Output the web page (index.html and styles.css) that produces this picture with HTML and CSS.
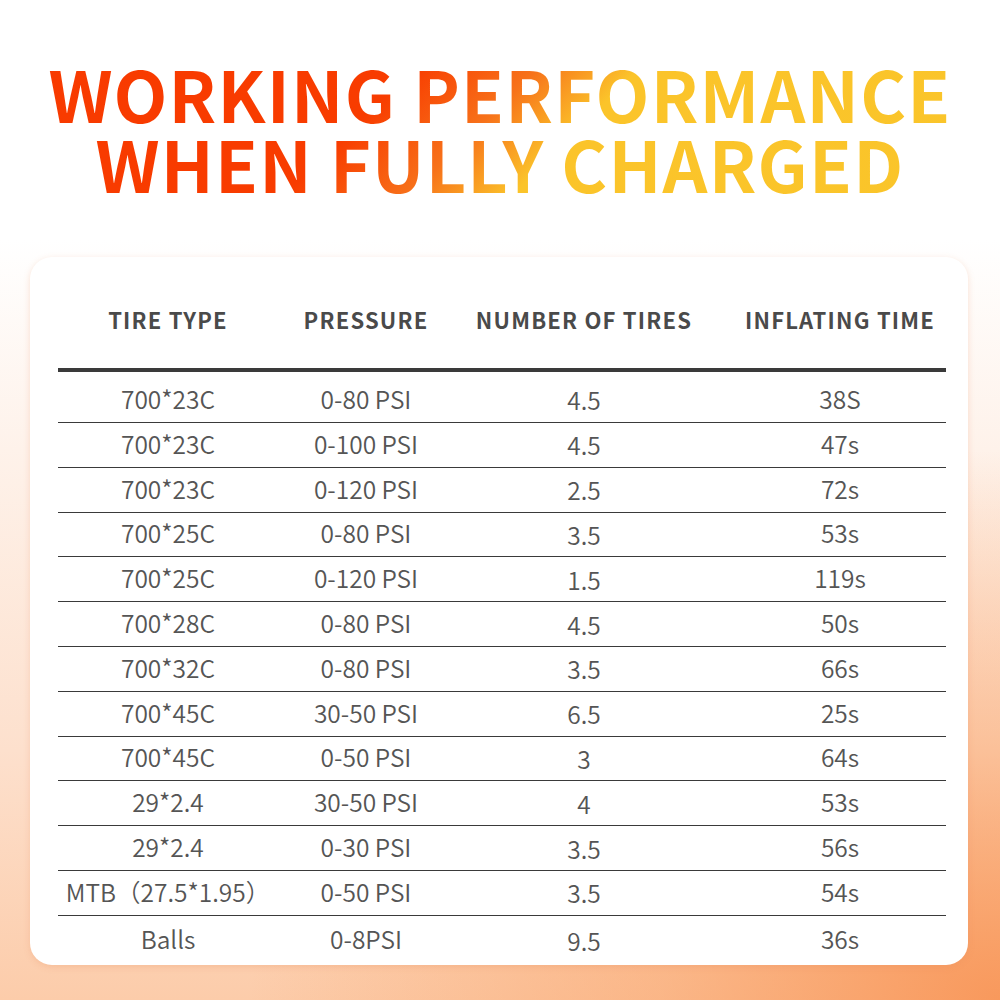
FILE: index.html
```html
<!DOCTYPE html>
<html>
<head>
<meta charset="utf-8">
<link rel="stylesheet" href="styles.css">
</head>
<body>
<div class="page">
  <h1 class="title"><span class="line">WORKING PERFORMANCE</span><span class="line">WHEN FULLY CHARGED</span></h1>
  <div class="card">
    <div class="table">
      <div class="row head">
        <div class="c c1">TIRE TYPE</div>
        <div class="c c2">PRESSURE</div>
        <div class="c c3">NUMBER OF TIRES</div>
        <div class="c c4">INFLATING TIME</div>
      </div>
      <div class="row first"><div class="c c1">700*23C</div><div class="c c2">0-80 PSI</div><div class="c c3">4.5</div><div class="c c4">38S</div></div>
      <div class="row"><div class="c c1">700*23C</div><div class="c c2">0-100 PSI</div><div class="c c3">4.5</div><div class="c c4">47s</div></div>
      <div class="row"><div class="c c1">700*23C</div><div class="c c2">0-120 PSI</div><div class="c c3">2.5</div><div class="c c4">72s</div></div>
      <div class="row"><div class="c c1">700*25C</div><div class="c c2">0-80 PSI</div><div class="c c3">3.5</div><div class="c c4">53s</div></div>
      <div class="row"><div class="c c1">700*25C</div><div class="c c2">0-120 PSI</div><div class="c c3">1.5</div><div class="c c4">119s</div></div>
      <div class="row"><div class="c c1">700*28C</div><div class="c c2">0-80 PSI</div><div class="c c3">4.5</div><div class="c c4">50s</div></div>
      <div class="row"><div class="c c1">700*32C</div><div class="c c2">0-80 PSI</div><div class="c c3">3.5</div><div class="c c4">66s</div></div>
      <div class="row"><div class="c c1">700*45C</div><div class="c c2">30-50 PSI</div><div class="c c3">6.5</div><div class="c c4">25s</div></div>
      <div class="row"><div class="c c1">700*45C</div><div class="c c2">0-50 PSI</div><div class="c c3">3</div><div class="c c4">64s</div></div>
      <div class="row"><div class="c c1">29*2.4</div><div class="c c2">30-50 PSI</div><div class="c c3">4</div><div class="c c4">53s</div></div>
      <div class="row"><div class="c c1">29*2.4</div><div class="c c2">0-30 PSI</div><div class="c c3">3.5</div><div class="c c4">56s</div></div>
      <div class="row"><div class="c c1">MTB（27.5*1.95）</div><div class="c c2">0-50 PSI</div><div class="c c3">3.5</div><div class="c c4">54s</div></div>
      <div class="row last"><div class="c c1">Balls</div><div class="c c2">0-8PSI</div><div class="c c3">9.5</div><div class="c c4">36s</div></div>
    </div>
  </div>
</div>
</body>
</html>
```
FILE: styles.css
```css
html, body {
  margin: 0;
  padding: 0;
}
body {
  width: 1000px;
  height: 1000px;
  overflow: hidden;
  font-family: "Noto Sans CJK SC", "Noto Sans", sans-serif;
}
.page {
  width: 1000px;
  height: 1000px;
  box-sizing: border-box;
  padding-top: 58px;
  background:
    radial-gradient(ellipse 75% 55% at 100% 100%, rgba(248,150,88,0.95) 0%, rgba(249,160,100,0.5) 45%, rgba(252,200,170,0) 100%),
    linear-gradient(to bottom, #ffffff 0%, #ffffff 24%, #fef2ea 45%, #fde0cd 75%, #fcccaa 100%);
}
.title {
  margin: 0 auto;
  width: 1000px;
  height: 140px;
  display: flex;
  flex-direction: column;
  align-items: center;
  font-size: 70px;
  line-height: 70px;
  letter-spacing: 1.2px;
  font-weight: 700;
  color: transparent;
  background: linear-gradient(135deg, #f83a00 0%, #f83c00 37%, #f7721a 48%, #fbc42a 57%, #fac52a 100%);
  -webkit-background-clip: text;
  background-clip: text;
}
.line {
  display: block;
  height: 70px;
  overflow: visible;
}
.card {
  margin: 59px 32px 0 30px;
  height: 708px;
  box-sizing: border-box;
  background: #fff;
  border-radius: 22px;
  padding: 0 22px 0 28px;
  box-shadow: 0 2px 6px rgba(230,140,90,0.25);
}
.table {
  display: flex;
  flex-direction: column;
}
.row {
  display: grid;
  grid-template-columns: 220px 176px 260px 232px;
  height: 44.8px;
  box-sizing: border-box;
  padding-bottom: 3px;
  align-items: center;
  border-bottom: 1px solid #3a3a3a;
  color: #555;
  font-size: 24.5px;
  font-weight: 350;
}
.row.head {
  height: 115px;
  padding-bottom: 33px;
  border-bottom: 4px solid #3a3a3a;
  font-weight: 700;
  font-size: 22px;
  color: #4a4a4a;
  letter-spacing: 1.2px;
  align-items: end;
}
.row.first {
  height: 51px;
  padding-top: 5px;
}
.row.last {
  border-bottom: none;
  height: 49px;
}
.c {
  text-align: center;
  white-space: nowrap;
}
.c4 {
  padding-left: 20px;
}
.row:not(.head) .c3 {
  padding-top: 3px;
}
```
